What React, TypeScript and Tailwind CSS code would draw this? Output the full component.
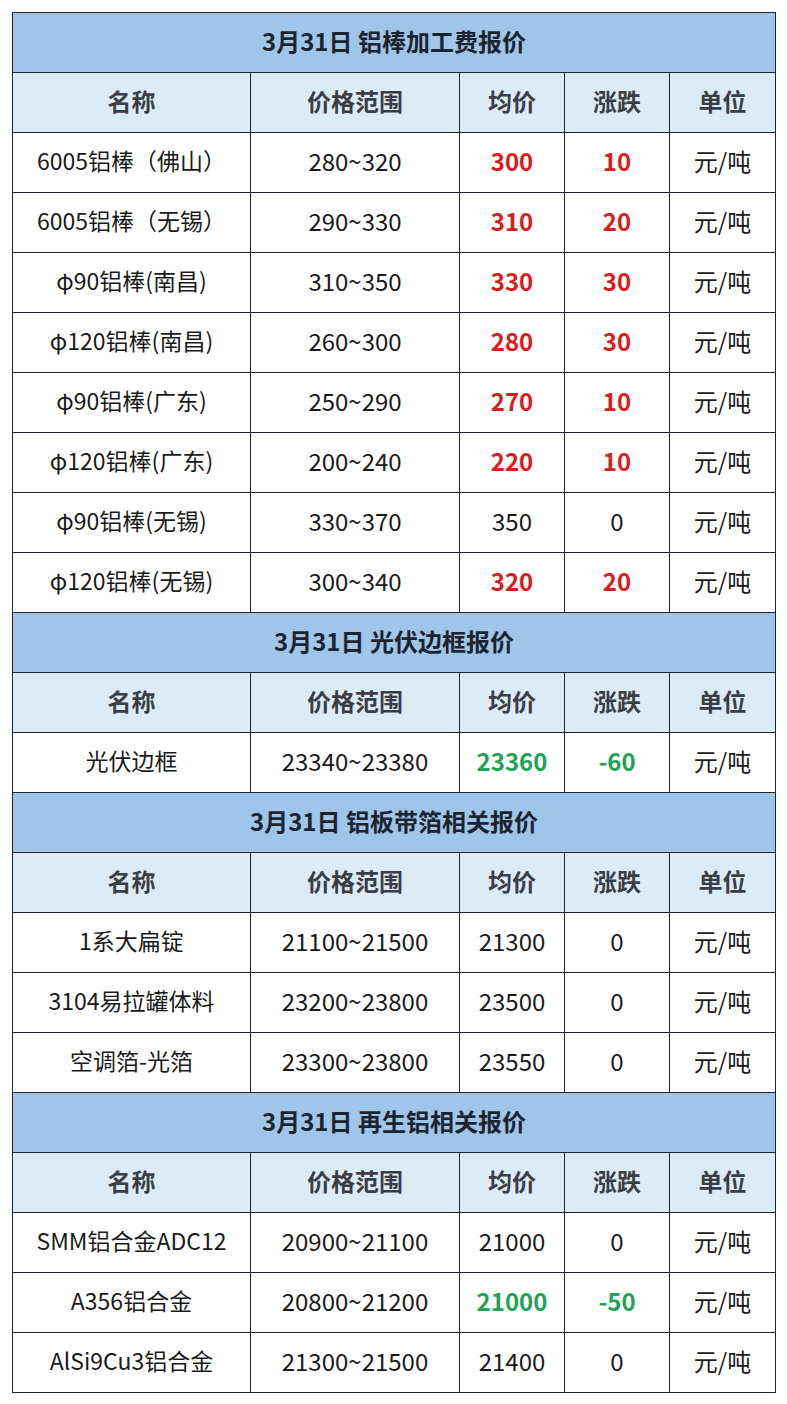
import React from 'react';

type Row = {
  name: string;
  range: string;
  avg: string;
  change: string;
  tone?: 'up' | 'down';
};

type Section = {
  title: string;
  rows: Row[];
};

const sections: Section[] = [
  {
    title: '3月31日 铝棒加工费报价',
    rows: [
      { name: '6005铝棒（佛山）', range: '280~320', avg: '300', change: '10', tone: 'up' },
      { name: '6005铝棒（无锡）', range: '290~330', avg: '310', change: '20', tone: 'up' },
      { name: 'φ90铝棒(南昌)', range: '310~350', avg: '330', change: '30', tone: 'up' },
      { name: 'φ120铝棒(南昌)', range: '260~300', avg: '280', change: '30', tone: 'up' },
      { name: 'φ90铝棒(广东)', range: '250~290', avg: '270', change: '10', tone: 'up' },
      { name: 'φ120铝棒(广东)', range: '200~240', avg: '220', change: '10', tone: 'up' },
      { name: 'φ90铝棒(无锡)', range: '330~370', avg: '350', change: '0' },
      { name: 'φ120铝棒(无锡)', range: '300~340', avg: '320', change: '20', tone: 'up' },
    ],
  },
  {
    title: '3月31日 光伏边框报价',
    rows: [{ name: '光伏边框', range: '23340~23380', avg: '23360', change: '-60', tone: 'down' }],
  },
  {
    title: '3月31日 铝板带箔相关报价',
    rows: [
      { name: '1系大扁锭', range: '21100~21500', avg: '21300', change: '0' },
      { name: '3104易拉罐体料', range: '23200~23800', avg: '23500', change: '0' },
      { name: '空调箔-光箔', range: '23300~23800', avg: '23550', change: '0' },
    ],
  },
  {
    title: '3月31日 再生铝相关报价',
    rows: [
      { name: 'SMM铝合金ADC12', range: '20900~21100', avg: '21000', change: '0' },
      { name: 'A356铝合金', range: '20800~21200', avg: '21000', change: '-50', tone: 'down' },
      { name: 'AlSi9Cu3铝合金', range: '21300~21500', avg: '21400', change: '0' },
    ],
  },
];

const headers = ['名称', '价格范围', '均价', '涨跌', '单位'];

const cell = 'border border-[#1e2530] h-[60px] p-0 pb-[4px] text-center align-middle leading-none';

const toneClass = (tone?: 'up' | 'down') =>
  tone === 'up'
    ? 'text-[#d91c1c] font-bold'
    : tone === 'down'
      ? 'text-[#1fa356] font-bold'
      : 'text-[#1a1a1a]';

export default function App() {
  return (
    <div
      className="bg-white w-[787px] h-[1404px] pt-[12px] pl-[12px]"
      style={{ fontFamily: '"Noto Sans CJK SC", "Noto Sans", sans-serif' }}
    >
      <table className="table-fixed border-collapse w-[763px]">
        <colgroup>
          <col className="w-[238px]" />
          <col className="w-[209px]" />
          <col className="w-[105px]" />
          <col className="w-[105px]" />
          <col className="w-[106px]" />
        </colgroup>
        <tbody>
          {sections.map((s) => (
            <React.Fragment key={s.title}>
              <tr>
                <td
                  colSpan={5}
                  className={cn(cell, 'bg-[#9fc5e8] text-[24px] font-bold text-[#1c2430]')}
                >
                  {s.title}
                </td>
              </tr>
              <tr>
                {headers.map((h) => (
                  <td
                    key={h}
                    className={cn(cell, 'bg-[#ddebf7] text-[24px] font-bold text-[#3b3f45]')}
                  >
                    {h}
                  </td>
                ))}
              </tr>
              {s.rows.map((r) => (
                <tr key={r.name} className="bg-white text-[24px]">
                  <td className={cn(cell, 'text-[#1a1a1a] whitespace-nowrap text-[23px]')}>{r.name}</td>
                  <td className={cn(cell, 'text-[#1a1a1a]')}>{r.range}</td>
                  <td className={cn(cell, toneClass(r.tone))}>{r.avg}</td>
                  <td className={cn(cell, toneClass(r.tone))}>{r.change}</td>
                  <td className={cn(cell, 'text-[#1a1a1a]')}>元/吨</td>
                </tr>
              ))}
            </React.Fragment>
          ))}
        </tbody>
      </table>
    </div>
  );
}

function cn(...c: string[]) {
  return c.join(' ');
}
